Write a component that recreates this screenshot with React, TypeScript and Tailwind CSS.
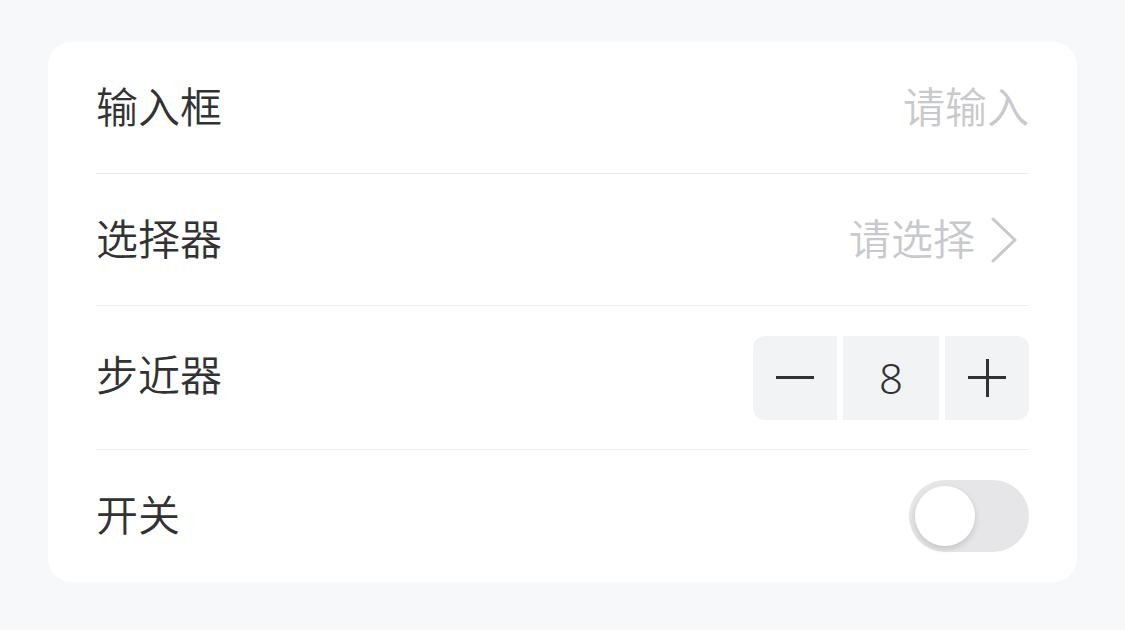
import React, { useState } from 'react'

const font = { fontFamily: '"Noto Sans CJK SC", "Noto Sans", sans-serif' }

function Row({ label, children, tall, last }: { label: string; children: React.ReactNode; tall?: boolean; last?: boolean }) {
  return (
    <div className={`flex items-center justify-between ${tall ? 'h-[144px]' : 'h-[132px]'} ${last ? '' : 'border-b-[1.5px] border-[#ebedf0]'}`}>
      <span className={`text-[42px] leading-none font-[350] text-[#323233] ${tall ? 'pb-[10px]' : 'pb-[6px]'}`}>{label}</span>
      {children}
    </div>
  )
}

export default function App() {
  const [val, setVal] = useState(8)
  const [on, setOn] = useState(false)

  return (
    <div className="w-[1125px] h-[630px] bg-[#f7f8fa] pt-[42px] px-[48px]" style={font}>
      <div className="bg-white rounded-[24px] px-[48px]">
        <Row label="输入框">
          <input
            placeholder="请输入"
            className="w-[400px] pb-[6px] text-right text-[42px] leading-none font-[350] text-[#323233] placeholder:text-[#c8c9cc] outline-none bg-transparent"
            style={font}
          />
        </Row>
        <Row label="选择器">
          <div className="flex items-center gap-[16px] pr-[12px]">
            <span className="text-[42px] leading-none font-[350] text-[#c8c9cc] pb-[6px]">请选择</span>
            <svg width="26" height="46" viewBox="0 0 26 46" fill="none">
              <path d="M2 2 L24 23 L2 44" stroke="#c8c9cc" strokeWidth="3" strokeLinejoin="round" strokeLinecap="round" />
            </svg>
          </div>
        </Row>
        <Row label="步近器" tall>
          <div className="flex items-center gap-[6px]">
            <button onClick={() => setVal(v => v - 1)} className="w-[84px] h-[84px] bg-[#f2f3f5] rounded-l-[12px] flex items-center justify-center">
              <span className="block w-[38px] h-[3px] bg-[#323233]" />
            </button>
            <div className="w-[96px] h-[84px] bg-[#f2f3f5] flex items-center justify-center text-[42px] font-light text-[#323233]" style={{ fontFamily: '"Noto Sans", sans-serif' }}>{val}</div>
            <button onClick={() => setVal(v => v + 1)} className="w-[84px] h-[84px] bg-[#f2f3f5] rounded-r-[12px] flex items-center justify-center relative">
              <span className="block w-[38px] h-[3px] bg-[#323233]" />
              <span className="absolute block w-[3px] h-[38px] bg-[#323233]" />
            </button>
          </div>
        </Row>
        <Row label="开关" last>
          <button onClick={() => setOn(o => !o)} className={`w-[120px] h-[72px] rounded-full p-[6px] flex items-center ${on ? 'bg-[#1989fa] justify-end' : 'bg-[#e6e6e8] justify-start'}`}>
            <span className="block w-[60px] h-[60px] rounded-full bg-white shadow-[0_3px_6px_rgba(0,0,0,0.15)]" />
          </button>
        </Row>
      </div>
    </div>
  )
}
